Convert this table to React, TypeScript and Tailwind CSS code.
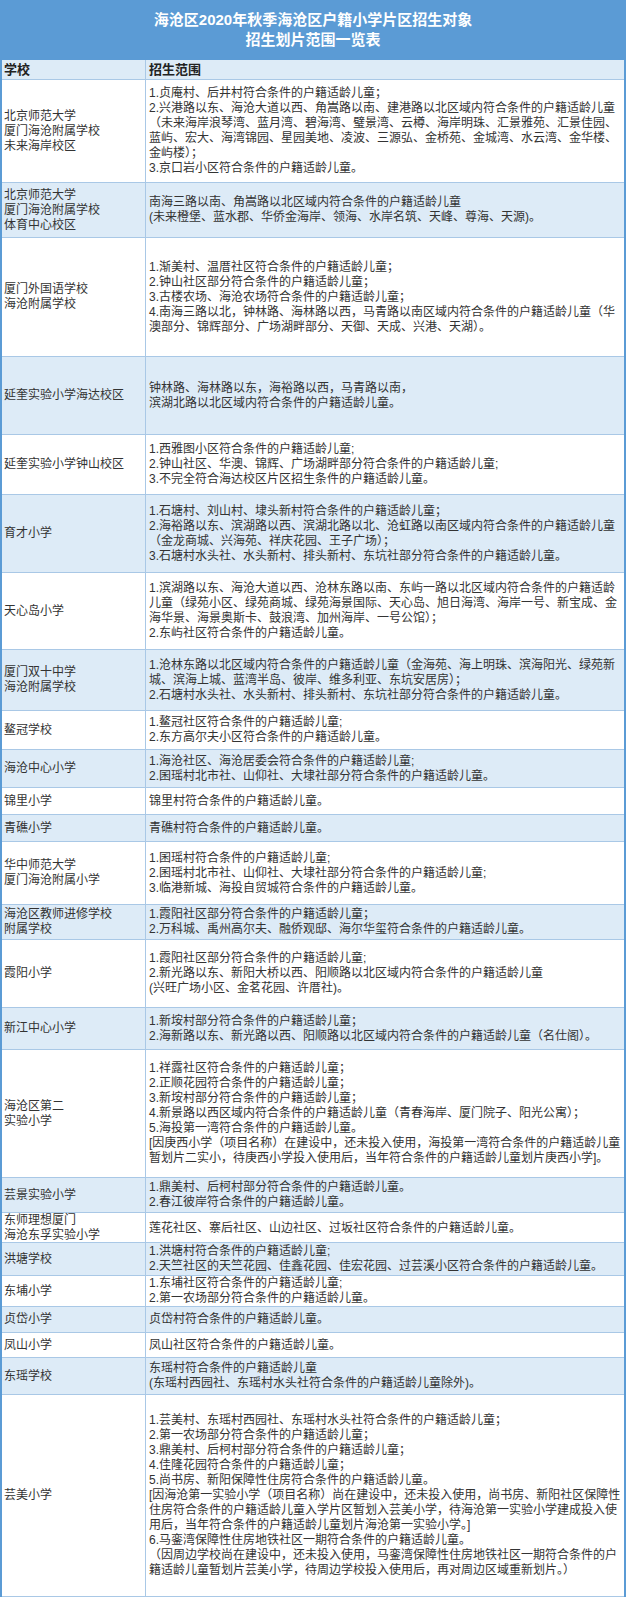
import React from 'react';

type Row = {
  school: string[];
  lines: string[];
  h: string;
  blue?: boolean;
};

const rows: Row[] = [
  {
    school: ['北京师范大学', '厦门海沧附属学校', '未来海岸校区'],
    lines: [
      '1.贞庵村、后井村符合条件的户籍适龄儿童；',
      '2.兴港路以东、海沧大道以西、角嵩路以南、建港路以北区域内符合条件的户籍适龄儿童',
      '（未来海岸浪琴湾、蓝月湾、碧海湾、璧景湾、云樽、海岸明珠、汇景雅苑、汇景佳园、',
      '蓝屿、宏大、海湾锦园、星园美地、凌波、三源弘、金桥苑、金城湾、水云湾、金华楼、',
      '金屿楼）；',
      '3.京口岩小区符合条件的户籍适龄儿童。',
    ],
    h: 'h-[103px]',
  },
  {
    school: ['北京师范大学', '厦门海沧附属学校', '体育中心校区'],
    lines: ['南海三路以南、角嵩路以北区域内符合条件的户籍适龄儿童', '(未来橙堡、蓝水郡、华侨金海岸、领海、水岸名筑、天峰、尊海、天源)。'],
    h: 'h-[55px]',
    blue: true,
  },
  {
    school: ['厦门外国语学校', '海沧附属学校'],
    lines: [
      '1.渐美村、温厝社区符合条件的户籍适龄儿童；',
      '2.钟山社区部分符合条件的户籍适龄儿童；',
      '3.古楼农场、海沧农场符合条件的户籍适龄儿童；',
      '4.南海三路以北，钟林路、海林路以西，马青路以南区域内符合条件的户籍适龄儿童（华',
      '澳部分、锦辉部分、广场湖畔部分、天御、天成、兴港、天湖）。',
    ],
    h: 'h-[119px]',
  },
  {
    school: ['延奎实验小学海达校区'],
    lines: ['钟林路、海林路以东，海裕路以西，马青路以南，', '滨湖北路以北区域内符合条件的户籍适龄儿童。'],
    h: 'h-[78px]',
    blue: true,
  },
  {
    school: ['延奎实验小学钟山校区'],
    lines: [
      '1.西雅图小区符合条件的户籍适龄儿童;',
      '2.钟山社区、华澳、锦辉、广场湖畔部分符合条件的户籍适龄儿童;',
      '3.不完全符合海达校区片区招生条件的户籍适龄儿童。',
    ],
    h: 'h-[60px]',
  },
  {
    school: ['育才小学'],
    lines: [
      '1.石塘村、刘山村、埭头新村符合条件的户籍适龄儿童；',
      '2.海裕路以东、滨湖路以西、滨湖北路以北、沧虹路以南区域内符合条件的户籍适龄儿童',
      '（金龙商城、兴海苑、祥庆花园、王子广场）；',
      '3.石塘村水头社、水头新村、排头新村、东坑社部分符合条件的户籍适龄儿童。',
    ],
    h: 'h-[78px]',
    blue: true,
  },
  {
    school: ['天心岛小学'],
    lines: [
      '1.滨湖路以东、海沧大道以西、沧林东路以南、东屿一路以北区域内符合条件的户籍适龄',
      '儿童（绿苑小区、绿苑商城、绿苑海景国际、天心岛、旭日海湾、海岸一号、新宝成、金',
      '海华景、海景奥斯卡、鼓浪湾、加州海岸、一号公馆）；',
      '2.东屿社区符合条件的户籍适龄儿童。',
    ],
    h: 'h-[77px]',
  },
  {
    school: ['厦门双十中学', '海沧附属学校'],
    lines: [
      '1.沧林东路以北区域内符合条件的户籍适龄儿童（金海苑、海上明珠、滨海阳光、绿苑新',
      '城、滨海上城、蓝湾半岛、彼岸、维多利亚、东坑安居房）；',
      '2.石塘村水头社、水头新村、排头新村、东坑社部分符合条件的户籍适龄儿童。',
    ],
    h: 'h-[61px]',
    blue: true,
  },
  {
    school: ['鳌冠学校'],
    lines: ['1.鳌冠社区符合条件的户籍适龄儿童;', '2.东方高尔夫小区符合条件的户籍适龄儿童。'],
    h: 'h-[39px]',
  },
  {
    school: ['海沧中心小学'],
    lines: ['1.海沧社区、海沧居委会符合条件的户籍适龄儿童;', '2.囷瑶村北市社、山仰社、大埭社部分符合条件的户籍适龄儿童。'],
    h: 'h-[38px]',
    blue: true,
  },
  { school: ['锦里小学'], lines: ['锦里村符合条件的户籍适龄儿童。'], h: 'h-[27px]' },
  { school: ['青礁小学'], lines: ['青礁村符合条件的户籍适龄儿童。'], h: 'h-[27px]', blue: true },
  {
    school: ['华中师范大学', '厦门海沧附属小学'],
    lines: [
      '1.囷瑶村符合条件的户籍适龄儿童;',
      '2.囷瑶村北市社、山仰社、大埭社部分符合条件的户籍适龄儿童;',
      '3.临港新城、海投自贸城符合条件的户籍适龄儿童。',
    ],
    h: 'h-[63px]',
  },
  {
    school: ['海沧区教师进修学校', '附属学校'],
    lines: ['1.霞阳社区部分符合条件的户籍适龄儿童；', '2.万科城、禹州高尔夫、融侨观邸、海尔华玺符合条件的户籍适龄儿童。'],
    h: 'h-[35px]',
    blue: true,
  },
  {
    school: ['霞阳小学'],
    lines: [
      '1.霞阳社区部分符合条件的户籍适龄儿童;',
      '2.新光路以东、新阳大桥以西、阳顺路以北区域内符合条件的户籍适龄儿童',
      '(兴旺广场小区、金茗花园、许厝社)。',
    ],
    h: 'h-[68px]',
  },
  {
    school: ['新江中心小学'],
    lines: ['1.新垵村部分符合条件的户籍适龄儿童；', '2.海新路以东、新光路以西、阳顺路以北区域内符合条件的户籍适龄儿童（名仕阁）。'],
    h: 'h-[42px]',
    blue: true,
  },
  {
    school: ['海沧区第二', '实验小学'],
    lines: [
      '1.祥露社区符合条件的户籍适龄儿童；',
      '2.正顺花园符合条件的户籍适龄儿童；',
      '3.新垵村部分符合条件的户籍适龄儿童；',
      '4.新景路以西区域内符合条件的户籍适龄儿童（青春海岸、厦门院子、阳光公寓）；',
      '5.海投第一湾符合条件的户籍适龄儿童。',
      '[因庚西小学（项目名称）在建设中，还未投入使用，海投第一湾符合条件的户籍适龄儿童',
      '暂划片二实小，待庚西小学投入使用后，当年符合条件的户籍适龄儿童划片庚西小学]。',
    ],
    h: 'h-[128px]',
  },
  {
    school: ['芸景实验小学'],
    lines: ['1.鼎美村、后柯村部分符合条件的户籍适龄儿童。', '2.春江彼岸符合条件的户籍适龄儿童。'],
    h: 'h-[35px]',
    blue: true,
  },
  {
    school: ['东师理想厦门', '海沧东孚实验小学'],
    lines: ['莲花社区、寨后社区、山边社区、过坂社区符合条件的户籍适龄儿童。'],
    h: 'h-[30px]',
  },
  {
    school: ['洪塘学校'],
    lines: ['1.洪塘村符合条件的户籍适龄儿童;', '2.天竺社区的天竺花园、佳鑫花园、佳宏花园、过芸溪小区符合条件的户籍适龄儿童。'],
    h: 'h-[33px]',
    blue: true,
  },
  {
    school: ['东埔小学'],
    lines: ['1.东埔社区符合条件的户籍适龄儿童;', '2.第一农场部分符合条件的户籍适龄儿童。'],
    h: 'h-[31px]',
  },
  { school: ['贞岱小学'], lines: ['贞岱村符合条件的户籍适龄儿童。'], h: 'h-[26px]', blue: true },
  { school: ['凤山小学'], lines: ['凤山社区符合条件的户籍适龄儿童。'], h: 'h-[25px]' },
  {
    school: ['东瑶学校'],
    lines: ['东瑶村符合条件的户籍适龄儿童', '(东瑶村西园社、东瑶村水头社符合条件的户籍适龄儿童除外)。'],
    h: 'h-[37px]',
    blue: true,
  },
  {
    school: ['芸美小学'],
    lines: [
      '1.芸美村、东瑶村西园社、东瑶村水头社符合条件的户籍适龄儿童；',
      '2.第一农场部分符合条件的户籍适龄儿童；',
      '3.鼎美村、后柯村部分符合条件的户籍适龄儿童；',
      '4.佳隆花园符合条件的户籍适龄儿童；',
      '5.尚书房、新阳保障性住房符合条件的户籍适龄儿童。',
      '[因海沧第一实验小学（项目名称）尚在建设中，还未投入使用，尚书房、新阳社区保障性',
      '住房符合条件的户籍适龄儿童入学片区暂划入芸美小学，待海沧第一实验小学建成投入使',
      '用后，当年符合条件的户籍适龄儿童划片海沧第一实验小学。]',
      '6.马銮湾保障性住房地铁社区一期符合条件的户籍适龄儿童。',
      '（因周边学校尚在建设中，还未投入使用，马銮湾保障性住房地铁社区一期符合条件的户',
      '籍适龄儿童暂划片芸美小学，待周边学校投入使用后，再对周边区域重新划片。）',
    ],
    h: 'h-[202px]',
  },
];

export default function App() {
  return (
    <div className="w-[626px] min-h-[1600px] bg-white font-['Liberation_Sans','Noto_Sans_CJK_SC',sans-serif] text-[12px] text-[#333] leading-[15px]">
      <div className="border-x-2 border-[#5b9bd5]">
        {/* title */}
        <div className="h-[60px] bg-[#5b9bd5] flex flex-col items-center justify-center text-white text-[15px] leading-[20px] font-bold">
          <div>海沧区2020年秋季海沧区户籍小学片区招生对象</div>
          <div>招生划片范围一览表</div>
        </div>

        {/* column header */}
        <div className="grid grid-cols-[144px_1fr] h-[20px] bg-[#ddebf7] border-b border-[#a9c8e6] font-bold text-[13px] text-[#222]">
          <div className="flex items-center pl-[2px] border-r border-[#a9c8e6]">学校</div>
          <div className="flex items-center pl-[3px]">招生范围</div>
        </div>

        {rows.map((r, i) => (
          <div
            key={i}
            className={`grid grid-cols-[144px_1fr] border-b border-[#a9c8e6] ${r.h} ${r.blue ? 'bg-[#ddebf7]' : 'bg-white'}`}
          >
            <div className="flex flex-col justify-center pl-[2px] border-r border-[#a9c8e6] whitespace-nowrap">
              {r.school.map((s, j) => (
                <div key={j}>{s}</div>
              ))}
            </div>
            <div className="flex flex-col justify-center pl-[3px] whitespace-nowrap">
              {r.lines.map((l, j) => (
                <div key={j}>{l}</div>
              ))}
            </div>
          </div>
        ))}
      </div>
    </div>
  );
}
